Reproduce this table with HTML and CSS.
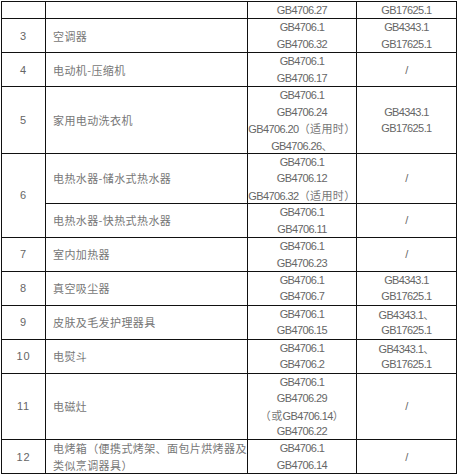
FILE: index.html
```html
<!DOCTYPE html>
<html lang="zh-CN">
<head>
<meta charset="utf-8">
<title>家用电器标准对照表</title>
<link rel="stylesheet" href="styles.css">
</head>
<body>
<div class="page">
<table class="grid">
<colgroup><col class="c-no"><col class="c-name"><col class="c-std"><col class="c-emc"></colgroup>
<tbody>
<tr><td class="no"><span class="ln"></span></td><td class="name"></td><td class="std"><span class="ln">GB4706.27</span></td><td class="std"><span class="ln">GB17625.1</span></td></tr>
<tr><td class="no"><span class="ln">3</span></td><td class="name"><span class="ln">空调器</span></td><td class="std"><span class="ln">GB4706.1</span><span class="ln">GB4706.32</span></td><td class="std"><span class="ln">GB4343.1</span><span class="ln">GB17625.1</span></td></tr>
<tr><td class="no"><span class="ln">4</span></td><td class="name"><span class="ln">电动机-压缩机</span></td><td class="std"><span class="ln">GB4706.1</span><span class="ln">GB4706.17</span></td><td class="std"><span class="ln">/</span></td></tr>
<tr><td class="no"><span class="ln">5</span></td><td class="name"><span class="ln">家用电动洗衣机</span></td><td class="std"><span class="ln">GB4706.1</span><span class="ln">GB4706.24</span><span class="ln">GB4706.20<span class="zh">（适用时）</span></span><span class="ln">GB4706.26<span class="zh">、</span></span></td><td class="std"><span class="ln">GB4343.1</span><span class="ln">GB17625.1</span></td></tr>
<tr><td class="no" rowspan="2"><span class="ln">6</span></td><td class="name"><span class="ln">电热水器-储水式热水器</span></td><td class="std"><span class="ln">GB4706.1</span><span class="ln">GB4706.12</span><span class="ln">GB4706.32<span class="zh">（适用时）</span></span></td><td class="std"><span class="ln">/</span></td></tr>
<tr><td class="name"><span class="ln">电热水器-快热式热水器</span></td><td class="std"><span class="ln">GB4706.1</span><span class="ln">GB4706.11</span></td><td class="std"><span class="ln">/</span></td></tr>
<tr><td class="no"><span class="ln">7</span></td><td class="name"><span class="ln">室内加热器</span></td><td class="std"><span class="ln">GB4706.1</span><span class="ln">GB4706.23</span></td><td class="std"><span class="ln">/</span></td></tr>
<tr><td class="no"><span class="ln">8</span></td><td class="name"><span class="ln">真空吸尘器</span></td><td class="std"><span class="ln">GB4706.1</span><span class="ln">GB4706.7</span></td><td class="std"><span class="ln">GB4343.1</span><span class="ln">GB17625.1</span></td></tr>
<tr><td class="no"><span class="ln">9</span></td><td class="name"><span class="ln">皮肤及毛发护理器具</span></td><td class="std"><span class="ln">GB4706.1</span><span class="ln">GB4706.15</span></td><td class="std"><span class="ln">GB4343.1<span class="zh">、</span></span><span class="ln">GB17625.1</span></td></tr>
<tr><td class="no"><span class="ln">10</span></td><td class="name"><span class="ln">电熨斗</span></td><td class="std"><span class="ln">GB4706.1</span><span class="ln">GB4706.2</span></td><td class="std"><span class="ln">GB4343.1<span class="zh">、</span></span><span class="ln">GB17625.1</span></td></tr>
<tr><td class="no"><span class="ln">11</span></td><td class="name"><span class="ln">电磁灶</span></td><td class="std"><span class="ln">GB4706.1</span><span class="ln">GB4706.29</span><span class="ln"><span class="zh">（或</span>GB4706.14<span class="zh">）</span></span><span class="ln">GB4706.22</span></td><td class="std"><span class="ln">/</span></td></tr>
<tr><td class="no"><span class="ln">12</span></td><td class="name"><span class="ln">电烤箱（便携式烤架、面包片烘烤器及</span><span class="ln">类似烹调器具）</span></td><td class="std"><span class="ln">GB4706.1</span><span class="ln">GB4706.14</span></td><td class="std"><span class="ln">/</span></td></tr>
</tbody>
</table>
</div>
</body>
</html>
```

FILE: styles.css
```css
html, body {
  margin: 0;
  padding: 0;
  background: #ffffff;
}

.page {
  padding: 1px 0 0 1px;
}

.grid {
  border-collapse: collapse;
  table-layout: fixed;
  width: 455px;
  font-family: "Liberation Sans", "Noto Sans CJK SC", sans-serif;
  font-size: 11px;
  color: #666666;
}

.c-no { width: 44px; }
.c-name { width: 202px; }
.c-std { width: 109px; }
.c-emc { width: 100px; }

.grid td {
  border: 1px solid #111111;
  padding: 0;
  vertical-align: middle;
  white-space: nowrap;
  line-height: 10px;
}

.ln {
  display: block;
  height: 16.45px;
  line-height: 16.45px;
  overflow: visible;
}

.no {
  text-align: center;
  letter-spacing: 0.8px;
}

.name {
  text-align: left;
  padding-left: 7px !important;
  font-family: "Noto Sans CJK SC", sans-serif;
  letter-spacing: 0.4px;
  color: #777777;
}

.std {
  text-align: center;
  letter-spacing: -0.6px;
}

.zh {
  font-family: "Noto Sans CJK SC", sans-serif;
  letter-spacing: 0.4px;
  color: #777777;
}
```
